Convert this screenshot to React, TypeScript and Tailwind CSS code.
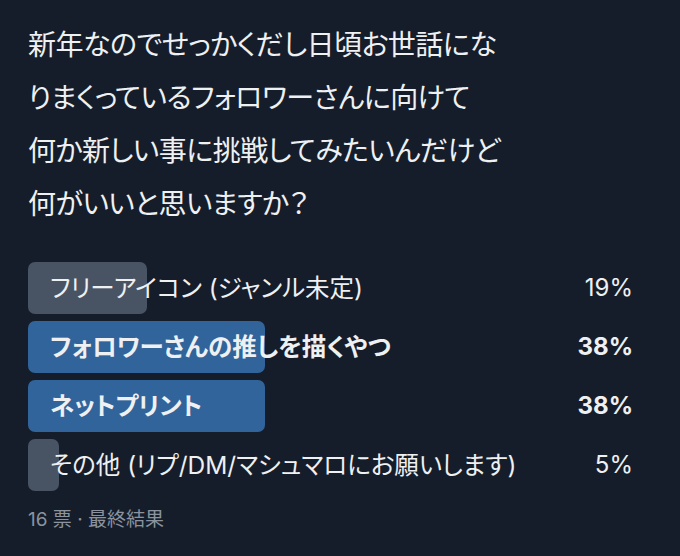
import React from "react";

const lines = [
  "新年なのでせっかくだし日頃お世話にな",
  "りまくっているフォロワーさんに向けて",
  "何か新しい事に挑戦してみたいんだけど",
  "何がいいと思いますか？",
];

const options = [
  { label: "フリーアイコン (ジャンル未定)", pct: 19, win: false },
  { label: "フォロワーさんの推しを描くやつ", pct: 38, win: true },
  { label: "ネットプリント", pct: 38, win: true },
  { label: "その他 (リプ/DM/マシュマロにお願いします)", pct: 5, win: false },
];

export default function App() {
  return (
    <div
      className="w-[680px] h-[556px] bg-[#161d2a] text-[#eef0f2] px-7 pt-[17px] overflow-hidden"
      style={{ fontFamily: '"Inter", "Noto Sans CJK JP", sans-serif' }}
    >
      <div className="text-[28px] leading-[53px] tracking-[-0.5px] [font-feature-settings:'palt'] font-['Noto_Sans_CJK_JP',sans-serif]">
        {lines.map((l) => (
          <span key={l} className="block whitespace-nowrap">
            {l}
          </span>
        ))}
      </div>
      <div className="mt-[33px] flex flex-col gap-[7px]">
        {options.map((o) => (
          <div key={o.label} className="relative h-[52px] flex items-center">
            <div
              className={`absolute left-0 top-0 h-full rounded-[7px] ${
                o.win ? "bg-[#30649b]" : "bg-[#485464]"
              }`}
              style={{ width: `${o.pct}%` }}
            />
            <span
              className={`relative pl-[22px] text-[24.5px] whitespace-nowrap [font-feature-settings:'palt'] ${
                o.win ? "font-bold" : "font-normal"
              }`}
            >
              {o.label}
            </span>
            <span
              className={`relative ml-auto pr-[19px] text-[24px] ${
                o.win ? "font-bold" : "font-normal"
              }`}
            >
              {o.pct}%
            </span>
          </div>
        ))}
      </div>
      <div className="mt-[17px] text-[19px] leading-[24px] text-[#8a939e] [font-feature-settings:'palt']">
        16 票 · 最終結果
      </div>
    </div>
  );
}
